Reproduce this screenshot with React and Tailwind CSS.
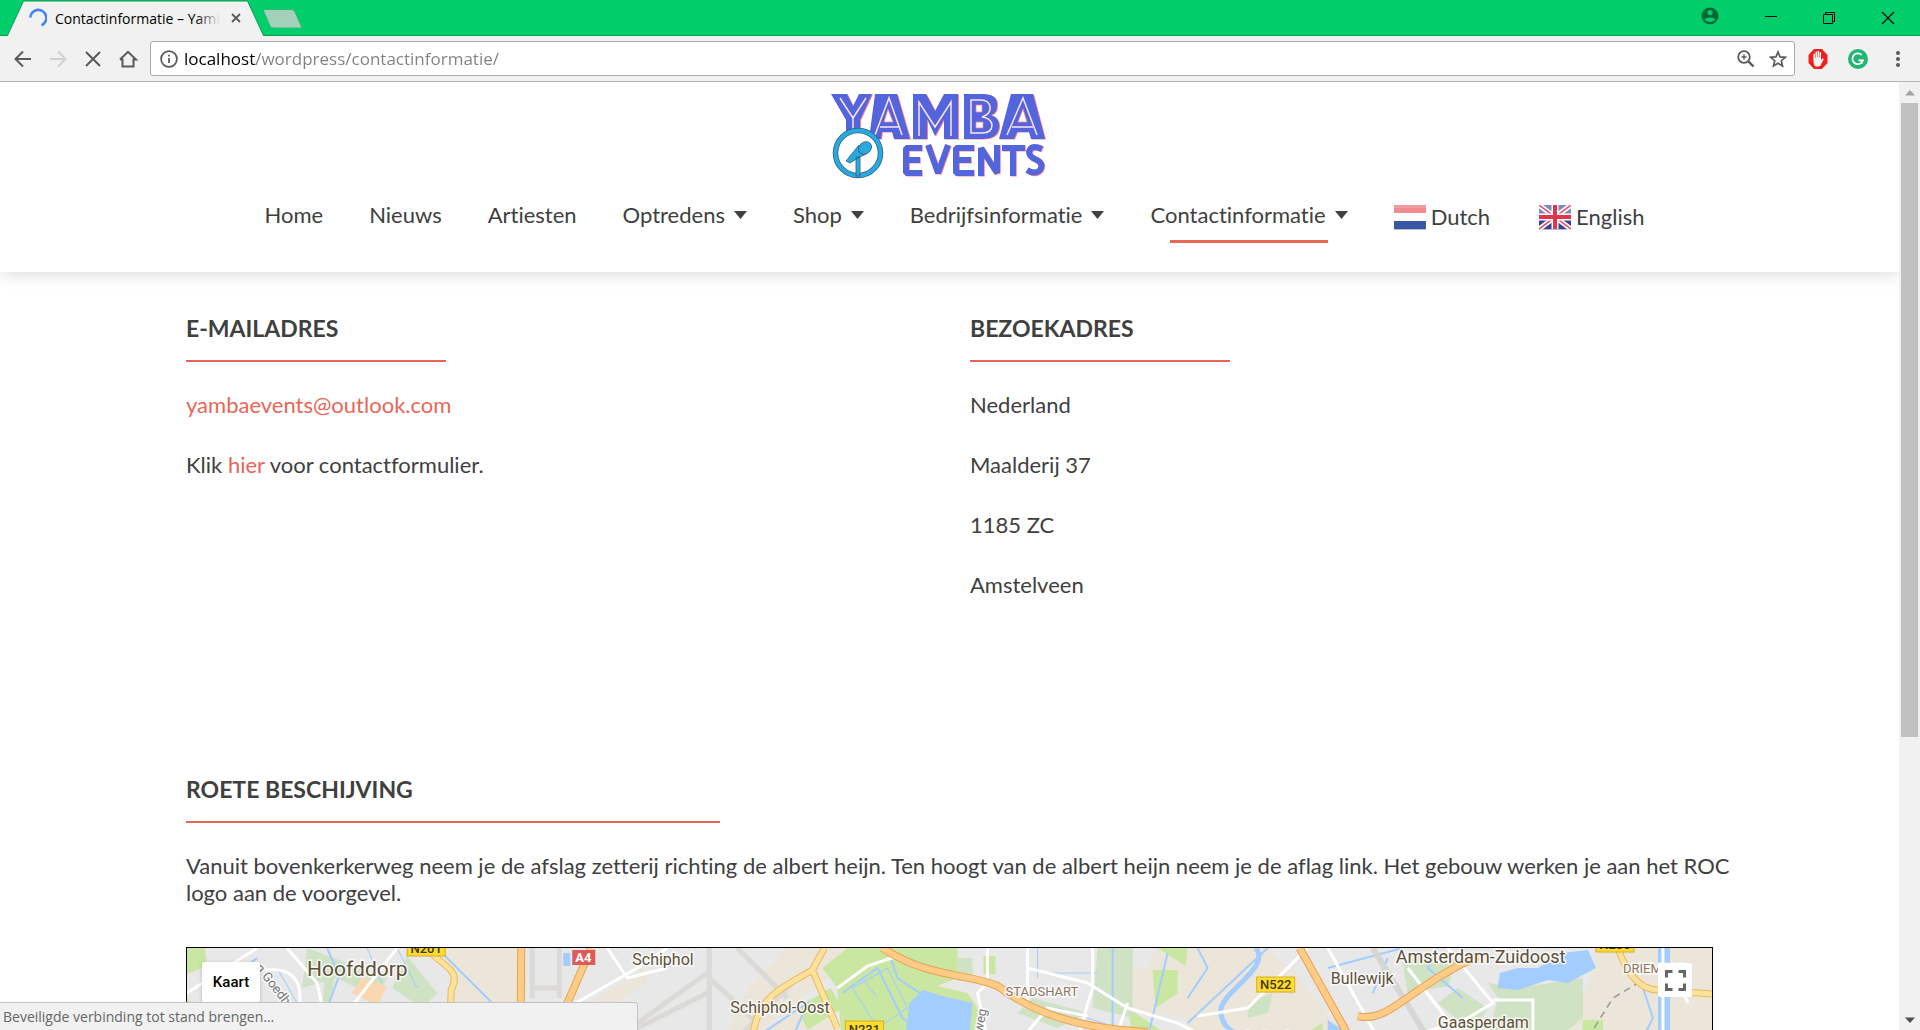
import React from "react";

const uiFont = "font-['Open_Sans','Noto_Sans',sans-serif]";

function TabStrip() {
  return (
    <div className="relative flex h-9 shrink-0 items-stretch justify-between border-b border-[#0b9a4f] bg-[#00ce6b]">
      <div className="flex items-start">
        <div className="relative h-9 w-[264px]">
          <svg className="absolute inset-0" width="264" height="36" viewBox="0 0 264 36">
            <path d="M0 35.5H7.500L23.500 1H247.500L263.500 35.500" fill="#f1f1f1" stroke="#0b9a4f" />
            <path d="M0 0H23L7.500 35H0Z" fill="#00ce6b" />
            <path d="M8 35.500H263" stroke="#f1f1f1" />
          </svg>
          <div className="relative flex h-9 items-center gap-2 pr-5 pl-7">
            <svg className="shrink-0" width="19" height="20" viewBox="0 0 19 20" fill="none" stroke="#4285f4" strokeWidth="2.600">
              <path d="M2.300 9.500A8 8 0 1 1 13.500 17.200" />
            </svg>
            <span className="relative w-[169px] overflow-hidden text-[14px] whitespace-nowrap text-black">
              Contactinformatie – Yamb
              <span className="absolute inset-y-0 right-0 w-6 bg-linear-to-r from-transparent to-[#f1f1f1]" />
            </span>
            <button aria-label="Tab sluiten" className="flex size-4 shrink-0 items-center justify-center">
              <svg width="10" height="10" viewBox="0 0 10 10" stroke="#5a5a5a" strokeWidth="1.800">
                <path d="M1 1L9 9M9 1L1 9" />
              </svg>
            </button>
          </div>
        </div>
        <button aria-label="Nieuw tabblad" className="mt-2">
          <svg width="40" height="22" viewBox="1 0 40 22">
            <path d="M0 1.500H28Q31 1.500 32 4L39 20H11Q8 20 7 18Z" fill="#a2d0b9" stroke="#35b97a" />
          </svg>
        </button>
      </div>
      <div className="flex items-center gap-[46px] pr-[25px]">
        <button aria-label="Profiel" className="-mt-1">
          <svg width="18" height="18" viewBox="0 0 18 18">
            <circle cx="9" cy="9" r="8.500" fill="#006735" />
            <circle cx="9" cy="5.500" r="2.600" fill="#00ce6b" />
            <path d="M3.800 12.500C4.500 9.800 13.500 9.800 14.200 12.500C12.500 15.700 5.500 15.700 3.800 12.500Z" fill="#00ce6b" />
          </svg>
        </button>
        <button aria-label="Minimaliseren">
          <svg width="12" height="12" viewBox="0 0 12 12" stroke="#000">
            <path d="M0 4.500H12" />
          </svg>
        </button>
        <button aria-label="Vorig formaat">
          <svg width="12" height="12" viewBox="0 0 12 12" fill="none" stroke="#000">
            <path d="M.5 2.500H9.500V11.500H.5ZM2.500 2.500V.5H11.500V9.500H9.500" />
          </svg>
        </button>
        <button aria-label="Sluiten">
          <svg width="14" height="14" viewBox="0 0 14 14" stroke="#000" strokeWidth="1.200">
            <path d="M1 1L13 13M13 1L1 13" />
          </svg>
        </button>
      </div>
    </div>
  );
}

function Toolbar() {
  return (
    <div className="flex h-[46px] shrink-0 items-center border-b border-[#b4b4b4] bg-[#f1f1f1] pr-[18px] pl-3">
      <div className="flex w-[138px] items-center gap-[13px]">
        <button aria-label="Terug">
          <svg width="22" height="22" viewBox="0 0 22 22" fill="none" stroke="#5a5a5a" strokeWidth="2">
            <path d="M19 11H4M11 3.500L3.500 11L11 18.500" />
          </svg>
        </button>
        <button aria-label="Vooruit">
          <svg width="22" height="22" viewBox="0 0 22 22" fill="none" stroke="#d0d0d0" strokeWidth="2">
            <path d="M3 11H18M11 3.500L18.500 11L11 18.500" />
          </svg>
        </button>
        <button aria-label="Stoppen">
          <svg width="22" height="22" viewBox="0 0 22 22" fill="none" stroke="#5a5a5a" strokeWidth="2">
            <path d="M4 4L18 18M18 4L4 18" />
          </svg>
        </button>
        <button aria-label="Startpagina">
          <svg width="22" height="22" viewBox="0 0 22 22" fill="none" stroke="#5a5a5a" strokeWidth="2">
            <path d="M5.500 11V18.500H16.500V11M3 11.500L11 3.800L19 11.500H16M6 11.500H3" />
          </svg>
        </button>
      </div>
      <div className="flex h-[35px] flex-1 items-center rounded-[3px] border border-[#a9a9a9] bg-white pr-[7px] pl-[9px]">
        <svg className="shrink-0" width="18" height="18" viewBox="0 0 18 18" fill="none" stroke="#5a5a5a" strokeWidth="1.800">
          <circle cx="9" cy="9" r="7.900" />
          <path d="M9 8V13M9 4.800V6.500" />
        </svg>
        <input
          aria-label="Adres"
          defaultValue="localhost/wordpress/contactinformatie/"
          className="ml-[6px] min-w-0 flex-1 bg-[linear-gradient(90deg,#000_72px,#808080_72px)] bg-clip-text text-[17px] text-transparent outline-none"
        />
        <div className="flex items-center gap-[14px]">
          <button aria-label="Zoom">
            <svg width="18" height="18" viewBox="0 0 18 18" fill="none" stroke="#5a5a5a" strokeWidth="1.800">
              <circle cx="7" cy="7" r="5.800" />
              <path d="M11.300 11.300L16.500 16.500" strokeWidth="2.400" />
              <path d="M4.500 7H9.500M7 4.500V9.500" strokeWidth="1.400" />
            </svg>
          </button>
          <button aria-label="Bladwijzer">
            <svg width="18" height="18" viewBox="0 0 18 18" fill="none" stroke="#5a5a5a" strokeWidth="1.700">
              <path d="M9 2L11 6.900L16.300 7.300L12.300 10.700L13.500 16L9 13.200L4.500 16L5.700 10.700L1.700 7.300L7 6.900Z" />
            </svg>
          </button>
        </div>
      </div>
      <div className="flex items-center pl-[13px]">
        <button aria-label="AdBlock" className="mr-5">
          <svg width="20" height="20" viewBox="0 0 20 20">
            <path d="M6 0H14L19.500 6V14L14 20H6L.5 14V6Z" fill="#f0201c" />
            <path d="M5.500 5Q6.700 4 7 5V9H7.500V3Q8.500 2 9 3V8.500H9.500V2Q10.500 1 11 2V8.500H11.500V3.500Q12.500 2.500 13 3.500V11L14.500 9.500Q16.300 9 15.500 10.500L12.500 16.500Q9 19 6.500 16.500Q5 14 5.500 5Z" fill="#f4f4f4" />
          </svg>
        </button>
        <button aria-label="Grammarly" className="mr-[26px]">
          <svg width="20" height="20" viewBox="0 0 20 20" fill="none">
            <circle cx="10" cy="10" r="10" fill="#23b574" />
            <path d="M13.700 6A5.400 5.400 0 1 0 15 11.300H10.500M13.500 15V11.300H11" stroke="#fff" strokeWidth="1.800" />
          </svg>
        </button>
        <button aria-label="Menu">
          <svg width="8" height="18" viewBox="0 0 8 18" fill="#5a5a5a">
            <circle cx="4" cy="3" r="2" />
            <circle cx="4" cy="9" r="2" />
            <circle cx="4" cy="15" r="2" />
          </svg>
        </button>
      </div>
    </div>
  );
}

function YambaLogo() {
  return (
    <svg width="216" height="86" viewBox="0 0 216 86" role="img" aria-label="Yamba Events" fill="none">
      <g fill="#ff7d8b" transform="translate(1 .6)">
        <path d="M0 0H16L22 12L28 0H41L29 26V45H15V26ZM38 45L44 0H66L79 45H63L61 38H51L50 45ZM82 45V0H95L104 17L113 0H127V45H113V25L104 42L96 25V45ZM133 0H152Q167 0 166 12Q166 19 160 21Q169 24 168 33Q167 45 151 45H133ZM168 45L180 0H202L214 45H200L198 38H186L183 45Z" />
      </g>
      <path
        d="M0 0H16L22 12L28 0H41L29 26V45H15V26ZM38 45L44 0H66L79 45H63L61 38H51L50 45ZM82 45V0H95L104 17L113 0H127V45H113V25L104 42L96 25V45ZM133 0H152Q167 0 166 12Q166 19 160 21Q169 24 168 33Q167 45 151 45H133ZM168 45L180 0H202L214 45H200L198 38H186L183 45Z"
        fill="#5265dc"
      />
      <g stroke="#ffe3ec" strokeWidth="1.500">
        <path d="M9 4L22 24V45M35 4L22 24M44 41L58 4L71 41M49 33H68M88 42V8L104 33L120 8V42M140 6V39H151Q161 39 161 31Q160 24 151 23Q160 20 159 13Q158 6 150 6ZM176 41L192 4L206 41M181 33H202" />
      </g>
      <path d="M57 15L53 28H62ZM145 11H151V18H145ZM145 28H152V34H145ZM192 15L187 28H196Z" fill="#fff" stroke="#ff7d8b" strokeWidth=".8" />
      <g strokeWidth="6" strokeLinejoin="bevel" stroke="#ff8794" transform="translate(.8 .6)">
        <path d="M91 54H75V79H91M75 66H89M97 51L107 79L117 51M143 54H125V79H143M125 66H140M150 82V54L166 79V51M171 54H194M182 54V82M211 55Q200 50 198 58Q198 63 206 66Q213 70 209 76Q204 81 196 76" />
      </g>
      <g strokeWidth="6" strokeLinejoin="bevel" stroke="#5265dc">
        <path d="M91 54H75V79H91M75 66H89M97 51L107 79L117 51M143 54H125V79H143M125 66H140M150 82V54L166 79V51M171 54H194M182 54V82M211 55Q200 50 198 58Q198 63 206 66Q213 70 209 76Q204 81 196 76" />
      </g>
      <circle cx="27" cy="59" r="22.500" fill="#fff" stroke="#355a70" strokeWidth="5.500" />
      <circle cx="27" cy="59" r="22.500" stroke="#27a9e1" strokeWidth="4" />
      <g fill="#27a9e1" stroke="#355a70" strokeWidth=".8">
        <path d="M15 67L28 51L35 60L27 64L19 69ZM25 63H29V82H25Z" />
        <ellipse cx="34" cy="54" rx="7" ry="5.800" transform="rotate(-40 34 54)" />
      </g>
    </svg>
  );
}

function DutchFlag() {
  return (
    <svg className="mt-[2px]" width="32" height="25" viewBox="0 0 32 25">
      <rect y="1" width="32" height="24" rx="1" fill="#b9b9c2" />
      <rect width="32" height="24" fill="#fff" />
      <rect width="32" height="8" fill="#ee8a90" />
      <rect width="32" height="3" fill="#f09da2" />
      <rect y="16" width="32" height="8" fill="#3856a3" />
    </svg>
  );
}

function EnglishFlag() {
  return (
    <svg className="mt-[2px]" width="32" height="25" viewBox="0 0 32 25">
      <rect y="1" width="32" height="24" rx="1" fill="#b9b9c2" />
      <rect width="32" height="12" fill="#8187bd" />
      <rect y="12" width="32" height="12" fill="#39408f" />
      <path d="M0 0L32 24M32 0L0 24" stroke="#fff" strokeWidth="5" />
      <path d="M0 0L32 24M32 0L0 24" stroke="#e5566a" strokeWidth="1.600" />
      <path d="M16 0V24M0 12H32" stroke="#fff" strokeWidth="7" />
      <path d="M16 0V24M0 12H32" stroke="#e2344a" strokeWidth="4" />
    </svg>
  );
}

const links = [
  { label: "Home" },
  { label: "Nieuws" },
  { label: "Artiesten" },
  { label: "Optredens", menu: true },
  { label: "Shop", menu: true },
  { label: "Bedrijfsinformatie", menu: true },
  { label: "Contactinformatie", menu: true, active: true },
];

function SiteHeader() {
  return (
    <header className="flex h-[190px] shrink-0 flex-col items-center bg-white pt-3 shadow-[0_2px_16px_rgba(0,0,0,0.15)]">
      <a href="#home" className="ml-[-22px]">
        <YambaLogo />
      </a>
      <nav className="mt-4 ml-[10px] flex items-start whitespace-nowrap">
        {links.map((l) => (
          <a key={l.label} href={"#" + l.label} className="relative mr-[46px] flex h-10 items-center pb-1">
            {l.label}
            {l.menu && (
              <svg className="mt-[2px] ml-[9px]" width="13" height="8" viewBox="0 0 13 8" fill="#404040">
                <path d="M0 0H13L6.500 8Z" />
              </svg>
            )}
            {l.active && <span className="absolute right-5 -bottom-[7px] left-5 h-[3px] bg-[#e96656]" />}
          </a>
        ))}
        <a href="#nl" className="mr-[49px] flex h-10 items-center gap-[5px]">
          <DutchFlag />
          Dutch
        </a>
        <a href="#en" className="flex h-10 items-center gap-[5px]">
          <EnglishFlag />
          English
        </a>
      </nav>
    </header>
  );
}

function Section({ title, children }) {
  return (
    <section>
      <h2 className="text-[23px] leading-7 font-bold">{title}</h2>
      <div className="mt-[18px] mb-[29px] h-[2px] w-[35%] bg-[#e96656]" />
      <div className="flex flex-col gap-[33px]">{children}</div>
    </section>
  );
}

function MapDrawing() {
  const halo = { paintOrder: "stroke" };
  return (
    <svg className="block h-[400px] w-full" viewBox="0 0 1524 400" preserveAspectRatio="xMidYMin slice" fill="none">
      <rect width="1524" height="400" fill="#e8e8e8" />
      {/* fields */}
      <g fill="#ebe6d9">
        <path d="M220 0H332V60L320 400H240L260 60L270 35L255 10Z" />
        <path d="M600 0H660L640 30L570 85H540L560 40ZM570 90L620 50L660 90V400H570Z" />
        <path d="M940 20H975V45H940ZM970 0H1080L1100 20L1085 60L1040 50L1000 70L940 60Z" />
        <path d="M1000 70L1070 40L1105 20L1150 80V400H1010Z" />
        <path d="M1410 0H1524V400H1410L1370 80L1400 40Z" />
        <path d="M395 60L440 30L455 20L460 35L420 60Z" />
      </g>
      {/* parks */}
      <g fill="#c9e7a1">
        <path d="M0 0H18L20 18L0 26ZM0 50L20 75V400H0Z" />
        <path d="M660 0H770V30L750 38L780 45L790 60V400H680L650 40L635 20ZM610 60L643 40L655 60L620 82Z" />
        <path d="M796 8H808V26H796ZM965 22H990V45L968 60ZM970 0H1000L998 18ZM940 60L985 90H945Z" />
        <path d="M1110 90L1135 75V400H1100ZM1395 72H1415V400H1370Z" />
      </g>
      <g fill="#cfe3c4">
        <path d="M120 0L200 30L190 50L150 30L115 40ZM220 8L250 45L235 60L205 40ZM138 20L148 24L142 70H135Z" />
        <path d="M845 50L900 65L870 80L830 65ZM910 0H945V70L905 60ZM770 10H785V33H770ZM1060 55L1085 45L1080 65L1060 70Z" />
        <path d="M1215 15L1240 5L1250 15L1270 10L1260 38L1220 45ZM1300 35L1330 40L1395 30L1395 70L1370 90H1300L1310 50ZM1270 40L1300 60L1285 85L1250 55Z" />
      </g>
      <path d="M175 30L200 38L190 58L165 45Z" fill="#fad7b0" />
      {/* airport */}
      <g stroke="#dbdad7" strokeWidth="5">
        <path d="M345 0V50M372 0V50M345 40H372M450 75L520 25M430 90L520 45M522 0V90M550 0L600 50M605 35L550 90M522 30L570 75" />
      </g>
      {/* water */}
      <g fill="#a3ccff">
        <path d="M735 42L755 48L785 55L780 110H715L722 55Z" />
        <path d="M1310 40L1312 25L1330 20L1350 20L1375 5L1400 2L1408 20L1380 35L1360 32L1330 42Z" />
        <path d="M1470 0H1482V400H1470ZM1140 72L1160 85L1150 110H1140ZM376 5H383V18H376Z" />
      </g>
      <g stroke="#a3ccff">
        <path d="M250 0L310 60M140 0L152 28L140 60M20 50L70 10M1010 0L1020 20L1000 50M1215 0L1140 20" strokeWidth="2" />
        <path d="M700 0L710 30L740 50M655 45L690 20L715 70L735 85M1000 75L1080 0M1200 10L1185 45M1455 40L1465 70L1450 100M1250 0L1240 20L1275 50M925 0V90M980 5L960 90M605 90L620 55L560 95" strokeWidth="2" />
        <path d="M665 40L700 20L720 60L690 80ZM675 30L690 50M850 0V30M860 25H910M870 60L930 80M180 0L195 35M90 20L110 55M210 0L230 40" strokeWidth="1" />
      </g>
      <path d="M1068 0C1085 20 1030 45 1033 65C1037 85 1050 85 1058 90" stroke="#a3ccff" strokeWidth="5" />
      {/* local roads */}
      <g stroke="#fff" strokeWidth="3">
        <path d="M0 45L70 0M100 0L130 35L210 400M60 25Q120 10 112 60M210 0L140 90M380 60L450 20L480 0M420 0L440 30L480 20M650 40L680 18L710 8M800 0V35L790 45L800 90M840 0V60M835 90L860 60L900 68M840 20L900 35L940 60L990 75L1020 90M905 0V40L890 90M940 55L928 90" />
        <path d="M1010 68L1060 60L1120 0M1140 0L1190 90M1220 20L1270 85M1260 0L1305 55L1280 70L1220 90M1305 52H1345V100M1475 0V90M1485 20L1500 55" />
      </g>
      <path d="M1185 0L1240 90" stroke="#d6d6d6" strokeWidth="6" />
      <path d="M1400 90L1425 50L1450 35" stroke="#999" strokeWidth="1.500" strokeDasharray="7 5" />
      {/* main roads */}
      <g strokeLinejoin="round">
        <path d="M240 0C255 20 275 20 264 42L250 400M637 0L625 22C600 38 570 45 565 90M625 22L650 80M1430 0C1440 30 1455 42 1470 42L1524 46" stroke="#e8b860" strokeWidth="7" />
        <path d="M240 0C255 20 275 20 264 42L250 400M637 0L625 22C600 38 570 45 565 90M625 22L650 80M1430 0C1440 30 1455 42 1470 42L1524 46" stroke="#ffe29a" strokeWidth="5" />
        <path d="M334 0L331 400M404 0L378 60M695 0C740 30 780 25 810 38C840 60 880 80 960 84M1112 0L1165 95M1170 68C1200 76 1220 40 1290 8" stroke="#e9a04f" strokeWidth="8" />
        <path d="M334 0L331 400M404 0L378 60M695 0C740 30 780 25 810 38C840 60 880 80 960 84M1112 0L1165 95M1170 68C1200 76 1220 40 1290 8" stroke="#ffcc88" strokeWidth="6" />
      </g>
      {/* road shields */}
      <g fill="#ffda30" stroke="#d6af1c">
        <rect x="220" y="-8" width="38" height="16" />
        <rect x="658" y="73" width="38" height="18" />
        <rect x="1069" y="29" width="38" height="15" />
        <rect x="1408" y="-12" width="38" height="16" />
      </g>
      <rect x="385" y="2" width="23" height="15" fill="#dc5b5b" />
      <rect x="940" y="82" width="24" height="16" fill="#dc5b5b" />
      <g fontFamily="Roboto, sans-serif" fontSize="13" fontWeight="500" fill="#40391f" textAnchor="middle">
        <text x="239" y="5">N201</text>
        <text x="677" y="86">N231</text>
        <text x="1088" y="41">N522</text>
        <text x="1427" y="1">N236</text>
        <text x="396" y="14" fill="#fff" fontWeight="700">A4</text>
      </g>
      <g fontFamily="Roboto, sans-serif" fontSize="16" fill="#5e5037" stroke="#fff" strokeWidth="3" strokeOpacity=".8">
        <text x="120" y="28" fontSize="21" style={halo}>Hoofddorp</text>
        <text x="445" y="17" style={halo}>Schiphol</text>
        <text x="543" y="65" style={halo}>Schiphol-Oost</text>
        <text x="818" y="48" fontSize="13" fill="#8d7766" style={halo}>STADSHART</text>
        <text x="1143" y="36" style={halo}>Bullewijk</text>
        <text x="1208" y="15" fontSize="18" style={halo}>Amsterdam-Zuidoost</text>
        <text x="1250" y="80" style={halo}>Gaasperdam</text>
        <text x="1033" y="95" style={halo}>Ouderkerk</text>
        <text x="1435" y="25" fontSize="13" fill="#8d7766" style={halo}>DRIEMOND</text>
        <text x="0" y="0" fontSize="13" fill="#777" transform="translate(68 20) rotate(52)" style={halo}>n Goedhartlaan</text>
        <text x="0" y="0" fontSize="13" fill="#777" transform="translate(795 85) rotate(-80)" style={halo}>weg</text>
      </g>
    </svg>
  );
}

function RouteMap() {
  return (
    <div className="relative mt-[41px] overflow-hidden border border-black">
      <MapDrawing />
      <button className="absolute top-[14px] left-[15px] h-10 w-[58px] rounded-[2px] bg-white font-[Roboto,sans-serif] text-[15px] font-medium text-black shadow-[0_1px_4px_rgba(0,0,0,0.2)]">
        Kaart
      </button>
      <button
        aria-label="Volledig scherm"
        className="absolute top-[15px] right-5 flex size-[34px] items-center justify-center rounded-[2px] bg-white"
      >
        <svg width="21" height="21" viewBox="0 0 21 21" fill="none" stroke="#666" strokeWidth="3">
          <path d="M1.500 7.500V1.500H7.500M13.500 1.500H19.500V7.500M19.500 13.500V19.500H13.500M7.500 19.500H1.500V13.500" />
        </svg>
      </button>
    </div>
  );
}

function Scrollbar() {
  return (
    <div className="flex w-[21px] shrink-0 flex-col items-center bg-[#f1f1f1]">
      <div className="flex h-[21px] items-center justify-center">
        <svg width="10" height="6" viewBox="0 0 10 6" fill="#a3a3a3">
          <path d="M0 5.500L5 0L10 5.500Z" />
        </svg>
      </div>
      <div className="w-[17px] grow-[634] basis-0 bg-[#c1c1c1]" />
      <div className="grow-[272] basis-0" />
      <div className="flex h-[21px] items-center justify-center">
        <svg width="10" height="6" viewBox="0 0 10 6" fill="#505050">
          <path d="M0 .5L5 6L10 .5Z" />
        </svg>
      </div>
    </div>
  );
}

export default function App() {
  return (
    <div className={"relative flex h-screen flex-col overflow-hidden bg-white " + uiFont}>
      <TabStrip />
      <Toolbar />
      <div className="flex min-h-0 flex-1">
        <div className="min-w-0 flex-1 overflow-hidden font-[Lato,sans-serif] text-[22px] leading-[27px] text-[#404040] [font-variant-ligatures:none]">
          <SiteHeader />
          <main className="px-[186px] pt-[42px]">
            <div className="grid min-h-[461px] grid-cols-[784px_1fr]">
              <div className="w-[742px]">
                <Section title="E-MAILADRES">
                  <p>
                    <a href="mailto:yambaevents@outlook.com" className="text-[#e96656]">
                      yambaevents@outlook.com
                    </a>
                  </p>
                  <p>
                    Klik{" "}
                    <a href="#contact" className="text-[#e96656]">
                      hier
                    </a>{" "}
                    voor contactformulier.
                  </p>
                </Section>
              </div>
              <div>
                <Section title="BEZOEKADRES">
                  <p>Nederland</p>
                  <p>Maalderij 37</p>
                  <p>1185 ZC</p>
                  <p>Amstelveen</p>
                </Section>
              </div>
            </div>
            <Section title="ROETE BESCHIJVING">
              <p className="-mr-8">
                Vanuit bovenkerkerweg neem je de afslag zetterij richting de albert heijn. Ten hoogt van de albert heijn
                neem je de aflag link. Het gebouw werken je aan het ROC logo aan de voorgevel.
              </p>
            </Section>
            <RouteMap />
          </main>
        </div>
        <Scrollbar />
      </div>
      <div className="absolute bottom-0 left-0 h-7 w-[638px] rounded-tr-[4px] border-t border-r border-[#c3c3c3] bg-[#f1f1f1] pl-[3px] text-[14px] leading-7 text-[#666]">
        Beveiligde verbinding tot stand brengen...
      </div>
    </div>
  );
}
